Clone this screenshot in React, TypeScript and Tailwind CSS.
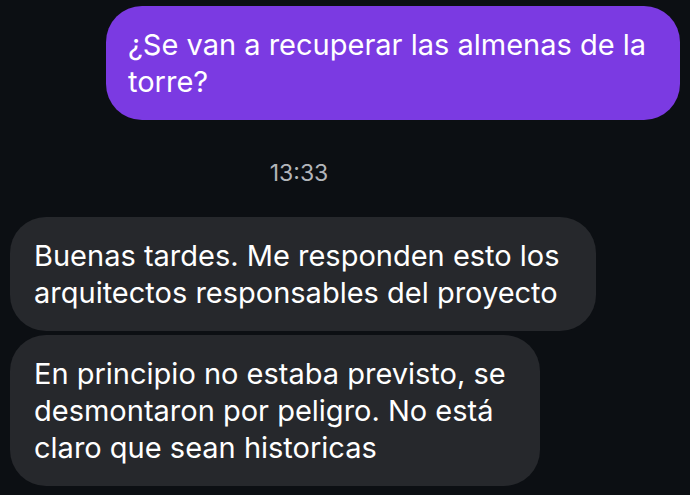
import React from 'react';

const font = { fontFamily: 'Inter, "Noto Sans", sans-serif' };

export default function App() {
  return (
    <div className="w-[690px] h-[495px] overflow-hidden bg-[#0c0f13] text-white" style={font}>
      {/* Outgoing */}
      <div className="flex justify-end pt-[6px] pr-[10px]">
        <div className="w-[574px] rounded-[36px] bg-[#7b3ae2] px-[22px] py-[20px] text-[29px] leading-[37px]">
          <span className="block whitespace-nowrap">¿Se van a recuperar las almenas de la</span>
          <span className="block">torre?</span>
        </div>
      </div>

      {/* Timestamp */}
      <div className="h-[97px] flex items-center justify-center pt-[10px] pr-[92px] text-[23px] text-[#b3b5ba]">
        13:33
      </div>

      {/* Incoming */}
      <div className="flex flex-col items-start gap-[4px] pl-[10px]">
        <div className="w-[586px] rounded-[36px] bg-[#26282c] px-[24px] py-[20px] text-[29px] leading-[37px]">
          <span className="block whitespace-nowrap">Buenas tardes. Me responden esto los</span>
          <span className="block whitespace-nowrap">arquitectos responsables del proyecto</span>
        </div>
        <div className="w-[530px] rounded-[36px] bg-[#26282c] px-[24px] py-[20px] text-[29px] leading-[37px]">
          <span className="block whitespace-nowrap">En principio no estaba previsto, se</span>
          <span className="block whitespace-nowrap">desmontaron por peligro. No está</span>
          <span className="block whitespace-nowrap">claro que sean historicas</span>
        </div>
      </div>
    </div>
  );
}
